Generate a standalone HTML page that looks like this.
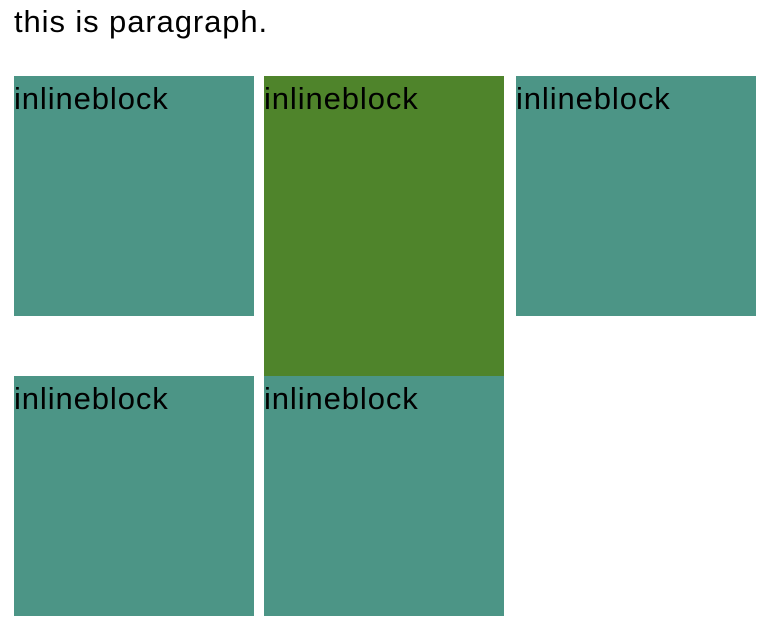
<!DOCTYPE html>
<html><head><style>
body{margin:0;width:774px;height:640px;background:#fff;font-family:"Liberation Sans",sans-serif;position:relative;overflow:hidden}
.p{position:absolute;left:14px;top:4px;font-size:31px;line-height:36px;color:#000;letter-spacing:0.9px}
.b{position:absolute;width:240px;height:240px;background:#4c9586;font-size:31px;line-height:46px;color:#000;letter-spacing:0.9px}
.b span{position:relative;top:0px}
</style></head><body>
<div class="p">this is paragraph.</div>
<div class="b" style="left:14px;top:76px"><span>inlineblock</span></div>
<div class="b" style="left:264px;top:76px;height:300px;background:#4f842b"><span>inlineblock</span></div>
<div class="b" style="left:516px;top:76px"><span>inlineblock</span></div>
<div class="b" style="left:14px;top:376px"><span>inlineblock</span></div>
<div class="b" style="left:264px;top:376px"><span>inlineblock</span></div>
</body></html>
